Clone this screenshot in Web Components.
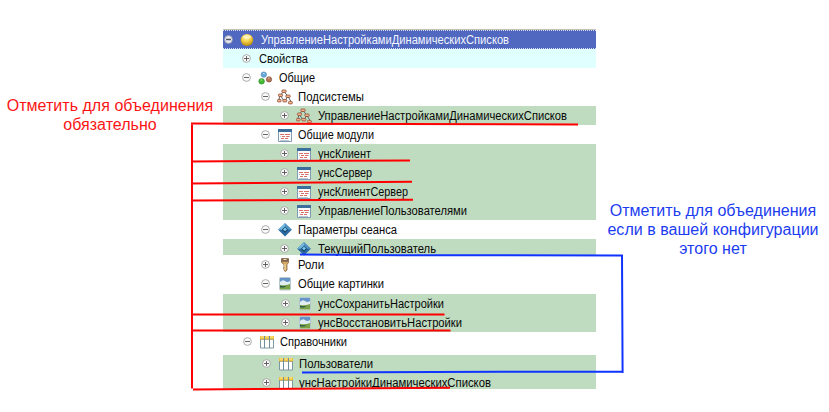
<!DOCTYPE html>
<html lang="ru"><head><meta charset="utf-8"><title>Дерево конфигурации</title>
<style>body{margin:0;background:#fff;overflow:hidden}</style></head><body>
<config-page></config-page>
<script>
const ICONS={
ball:'<defs><radialGradient id="g" cx=".45" cy=".3" r=".7"><stop offset="0" stop-color="#fff6a8"/><stop offset=".5" stop-color="#f4cf45"/><stop offset="1" stop-color="#b88910"/></radialGradient></defs><ellipse cx="8" cy="8" rx="6.3" ry="6" fill="url(#g)"/><ellipse cx="8" cy="5" rx="4" ry="1.8" fill="#fffbd0" opacity=".7"/>',
common:'<circle cx="6.8" cy="4.6" r="2.7" fill="#6aa9d8" stroke="#397db0" stroke-width=".6"/><circle cx="4.6" cy="11.3" r="2.8" fill="#46ba35" stroke="#258523" stroke-width=".6"/><circle cx="12" cy="9.4" r="2.7" fill="#b17459" stroke="#824b36" stroke-width=".6"/><path d="M6 3.5h1.5M3.7 10h1.5M11 8.2h1.5" stroke="#fff" opacity=".6"/>',
tree:'<path d="M6.8 2.5L3.3 6 1.8 11M3.5 6.5l3 5M7 2.5l4 5-3 4M11 7.5l3 5" fill="none" stroke="#596a72"/><g fill="#f3b48e" stroke="#8e4a30" stroke-width=".8"><rect x="4.8" y="1" width="4.4" height="2.5" rx="1"/><rect x="1.4" y="5" width="4.2" height="2.5" rx="1"/><rect x="8.8" y="6" width="4.4" height="2.5" rx="1"/><rect x=".4" y="10.4" width="3.7" height="2.5" rx="1"/><rect x="5.8" y="10.4" width="4" height="2.5" rx="1"/><rect x="11.4" y="12.4" width="4" height="2.5" rx="1"/></g>',
module:'<path d="M1.5 2.5h13v12h-13z" fill="#fbfdfe" stroke="#7f9cb4"/><path d="M1 2h14v3H1z" fill="#3d6f9d"/><path d="M3 7.5h4M8 7.5h5M5 9.5h3M9 9.5h3M4 11.5h3M8 11.5h3" stroke="#dd6f66"/><path d="M3 9.5h1M12 9.5h1M3 13.5h9" stroke="#bcc8d4"/>',
diamond:'<path d="M8 1.2L14.8 7.8 8 14.5 1.2 7.8z" fill="#2a6a9f"/><path d="M8 1.2L14.8 7.8H8L5.5 5z" fill="#4f93c4"/><path d="M8 1.2L1.2 7.8h4L8 5z" fill="#70b7df"/><path d="M8 4.8l3 3-3 3-3-3z" fill="#173e64"/><path d="M8 5.5l2 2-2 1.8-2-1.8z" fill="#79cbf0"/>',
key:'<path d="M4.5 1.5h7v4l-1.5 2v5.6l-1.6 1.4-1.4-1.2V7.5l-2.5-2z" fill="#d5aa63" stroke="#876342" stroke-width=".8"/><path d="M4.5 1.8h7v3h-7z" fill="#806351"/><path d="M6.5 2.5h3" stroke="#f4dfba"/><path d="M8 7v6" stroke="#ffecad"/><path d="M6 11h1" stroke="#876342"/>',
picture:'<rect x="2.5" y="1.5" width="11" height="12.5" rx="1" fill="#fff" stroke="#b5c6cc"/><path d="M3 2h10v6H3z" fill="#6594c9"/><path d="M3 6q3-3 5-1t5 0v4H3z" fill="#e1edf1"/><path d="M3 9q5 1 10-1v5.5H3z" fill="#7aa348"/><path d="M3 9.5q4 1 7 0l-3 2H3z" fill="#315f49"/>',
table:'<path d="M1.5 3h13v11h-13z" fill="#fff" stroke="#7b99a3"/><path d="M1 2h14v3.5H1z" fill="#edc340"/><path d="M2 3h3M6.5 3h3M11 3h3" stroke="#fff09b"/><path d="M5.5 2v12M10.5 2v12" stroke="#6f8d9b"/><path d="M1 5.5h14" stroke="#8c8e71" stroke-width=".6"/>'};
class TreeRow extends HTMLElement{
 connectedCallback(){
  const a=n=>this.getAttribute(n), x=+a('exp'), ix=a('ix'), tx=+a('tx');
  const minus=this.hasAttribute('open'), kind=a('icon');
  this.attachShadow({mode:'open'}).innerHTML=`<style>
:host{display:flow-root;height:${a('h')||19}px;background:${a('bg')||'transparent'};color:#080808;font:12px "Liberation Sans",Arial,sans-serif}
:host([selected]){color:#f3f5ff;background:linear-gradient(90deg,#d7defa 50%,#4b62b8 50%) 0 0/2px 1px repeat-x,linear-gradient(90deg,#d7defa 50%,#4b62b8 50%) 0 100%/2px 1px repeat-x,#5068c0}
:host([clip]){overflow:hidden}
.line{display:grid;grid-template-columns:${x-223+5}px ${tx-x-5}px max-content;height:19px;align-items:center;margin-top:${a('shift')||0}px}
.exp{justify-self:end;width:9px;height:9px;display:block}
.icon{width:16px;height:16px;display:block;margin-left:${ix?+ix-x-5:0}px}
.label{white-space:pre;line-height:19px;height:19px;padding-top:1px;box-sizing:border-box}
.label span{display:inline-block;line-height:19px;transform-origin:0 50%}
</style><div class="line"><svg class="exp" viewBox="0 0 9 9"><circle cx="4.5" cy="4.5" r="3.9" fill="${this.hasAttribute('selected')?'#e9edfb':'#fafafa'}" stroke="#999" stroke-width=".8"/><path d="M2 4.5h5${minus?'':'M4.5 2v5'}" stroke="#555" stroke-width="${this.hasAttribute('selected')?1.5:.9}"/></svg>${kind?`<svg class="icon" viewBox="0 0 16 16">${ICONS[kind]}</svg>`:'<i></i>'}<div class="label"><span><slot></slot></span></div></div>`;
  const s=this.shadowRoot.querySelector('.label span'), w=s.getBoundingClientRect().width;
  s.style.transform=`scaleX(${+a('w')/w})`;
 }}
class MarkNote extends HTMLElement{
 connectedCallback(){this.attachShadow({mode:'open'}).innerHTML=`<style>:host{display:block;text-align:center;white-space:nowrap;font:16px/19px "Liberation Sans",Arial,sans-serif;letter-spacing:.03px}</style><slot></slot>`}}
class MarkLines extends HTMLElement{
 connectedCallback(){this.attachShadow({mode:'open'}).innerHTML=`<style>:host{display:block;position:absolute;inset:0;pointer-events:none}svg{display:block}</style>
<svg width="829" height="412" fill="none" stroke-width="2"><g stroke="#f00"><path d="M578 124.4L400 124 191 123.5M192 123v265.5M192 161.4L410 160.4M192 183.4L412 181.7M192 200.6L413 199.7M192 314.4H444.5M192 330.4H450.5M193 389.4L300 388.8 450 387.8"/></g><path stroke="#1034ff" d="M300 254.5L400 255.2 622 255.4 622.6 373M623 371.7L500 371.7 302 372.4"/></svg>`}}
class ConfigPage extends HTMLElement{
 connectedCallback(){
  const G='#c0dcc0';
  const rows=[
  ['УправлениеНастройкамиДинамическихСписков',228,239,261,248,'ball','selected open',''],
  ['Свойства',246,'',259,49,'','','#e0ffff'],
  ['Общие',246,257,279,36,'common','open',''],
  ['Подсистемы',265,277,298,66,'tree','open',''],
  ['УправлениеНастройкамиДинамическихСписков',284,296,318,249,'tree','',G],
  ['Общие модули',265,277,298,76,'module','open',''],
  ['унсКлиент',284,296,318,53,'module','',G],
  ['унсСервер',284,296,318,54,'module','',G],
  ['унсКлиентСервер',284,296,318,90,'module','',G],
  ['УправлениеПользователями',284,296,318,149,'module','',G],
  ['Параметры сеанса',265,277,298,99,'diamond','open',''],
  ['ТекущийПользователь',284,296,318,118,'diamond','h="16"',G],
  ['Роли',265,277,298,26,'key','',''],
  ['Общие картинки',265,277,298,86,'picture','open h="20"',''],
  ['унсСохранитьНастройки',285,297,318,126,'picture','',G],
  ['унсВосстановитьНастройки',285,297,318,144,'picture','',G],
  ['Справочники',247,259,280,67,'table','open h="23"',''],
  ['Пользователи',266,278,299,74,'table','h="18" shift="-1"',G],
  ['унсНастройкиДинамическихСписков',266,278,299,192,'table','h="16" clip',G]];
  this.attachShadow({mode:'open'}).innerHTML=`<style>
:host{display:grid;grid-template-columns:223px 373px 1fr;width:829px;height:412px;position:relative;background:#fff}
.left{padding:96px 3px 0 0;color:#fb1414}.right{padding:201px 0 0 5px;color:#1c3cf0;width:223px}
.tree{padding-top:29px}.edge{height:1px;background:#c5c3b4}
.left mark-note{width:220px}.right mark-note{width:224px}
</style><div class="left"><mark-note>Отметить для объединения<br>обязательно</mark-note></div>
<div class="tree"><div class="edge"></div>${rows.map(r=>`<tree-row exp="${r[1]}" ix="${r[2]}" tx="${r[3]}" w="${r[4]}" icon="${r[5]}" ${r[6]} bg="${r[7]}">${r[0]}</tree-row>`).join('')}</div>
<div class="right"><mark-note>Отметить для объединения<br>если в вашей конфигурации<br>этого нет</mark-note></div><mark-lines></mark-lines>`;
 }}
customElements.define('tree-row',TreeRow);customElements.define('mark-note',MarkNote);customElements.define('mark-lines',MarkLines);customElements.define('config-page',ConfigPage);
</script></body></html>
